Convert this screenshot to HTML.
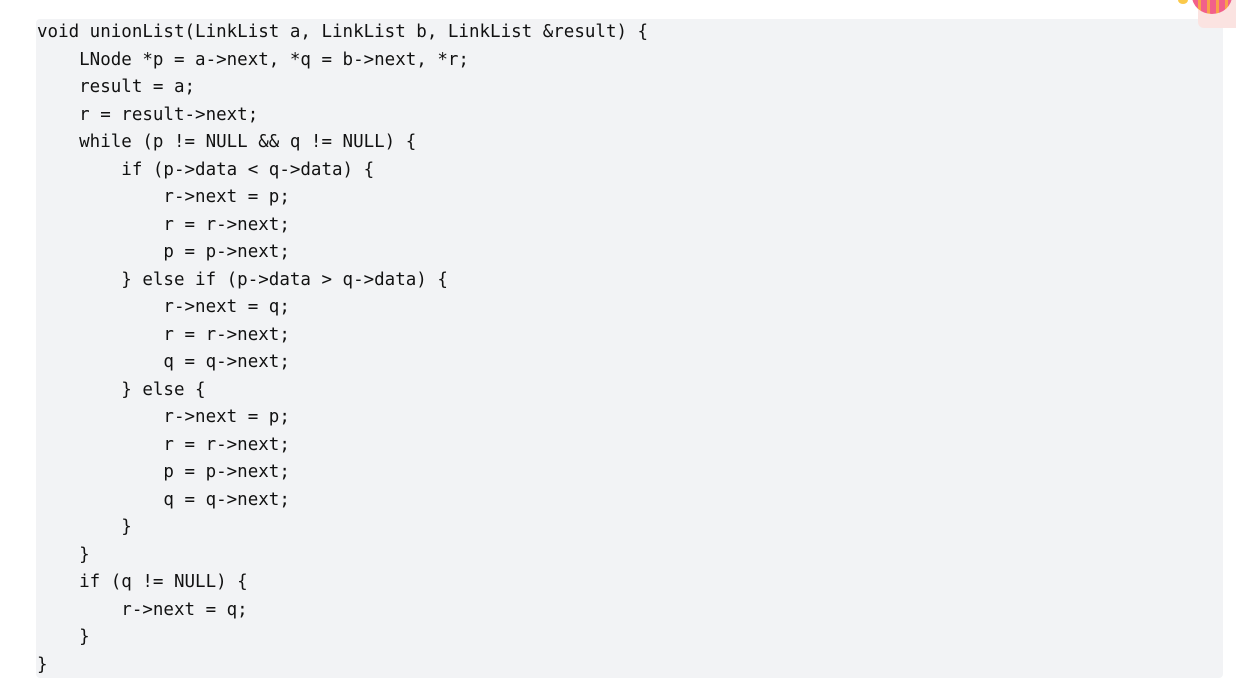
<!DOCTYPE html>
<html><head><style>
body{margin:0;width:1236px;height:695px;background:#fff;position:relative;overflow:hidden}
.bg{position:absolute;left:36px;top:19px;width:1187px;height:659px;background:#f2f3f5;border-radius:4px}
pre{position:absolute;left:37px;top:19px;margin:0;font-family:"DejaVu Sans Mono",monospace;font-size:17.5px;line-height:27.5px;color:#111}
.deco{position:absolute;left:1198px;top:0;width:38px;height:28px;background:#fbe3e1;border-radius:0 0 0 6px}
.ball{position:absolute;left:1192px;top:-22px;width:40px;height:36px;border-radius:50%;background:repeating-linear-gradient(90deg,#f2608a 0 6px,#f9a24a 6px 9px)}
.y{position:absolute;left:1178px;top:-4px;width:10px;height:8px;border-radius:50%;background:#fbc94a}
</style></head><body>
<div class="bg"></div>
<div class="deco"></div><div class="ball"></div><div class="y"></div>
<pre>void unionList(LinkList a, LinkList b, LinkList &amp;result) {
    LNode *p = a-&gt;next, *q = b-&gt;next, *r;
    result = a;
    r = result-&gt;next;
    while (p != NULL &amp;&amp; q != NULL) {
        if (p-&gt;data &lt; q-&gt;data) {
            r-&gt;next = p;
            r = r-&gt;next;
            p = p-&gt;next;
        } else if (p-&gt;data &gt; q-&gt;data) {
            r-&gt;next = q;
            r = r-&gt;next;
            q = q-&gt;next;
        } else {
            r-&gt;next = p;
            r = r-&gt;next;
            p = p-&gt;next;
            q = q-&gt;next;
        }
    }
    if (q != NULL) {
        r-&gt;next = q;
    }
}</pre>
</body></html>
